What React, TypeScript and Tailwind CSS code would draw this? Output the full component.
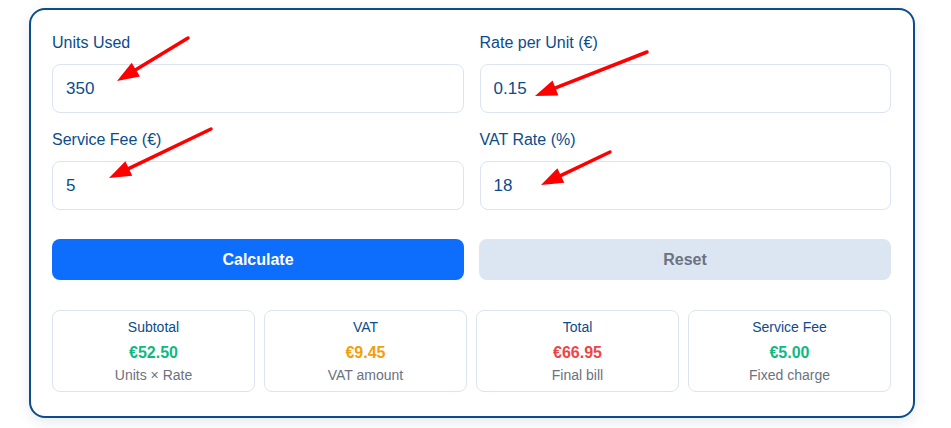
import { useState } from 'react';

const ARROWS = [
    { x1: 188, y1: 38, x2: 117, y2: 81 },
    { x1: 647, y1: 52, x2: 535, y2: 96 },
    { x1: 211, y1: 129, x2: 109, y2: 178 },
    { x1: 610, y1: 152, x2: 541, y2: 185 },
];

function Arrow({ x1, y1, x2, y2 }: { x1: number; y1: number; x2: number; y2: number }) {
    const dx = x2 - x1;
    const dy = y2 - y1;
    const len = Math.hypot(dx, dy);
    const ux = dx / len;
    const uy = dy / len;
    const head = 22;
    const half = 8;
    const bx = x2 - ux * head;
    const by = y2 - uy * head;
    const pts = `${x2},${y2} ${bx - uy * half},${by + ux * half} ${bx + uy * half},${by - ux * half}`;
    return (
        <g>
            <line x1={x1} y1={y1} x2={bx + ux * 2} y2={by + uy * 2} stroke="#ff0000" strokeWidth={3.5} strokeLinecap="round" />
            <polygon points={pts} fill="#ff0000" />
        </g>
    );
}

function Field({ label, value, onChange }: { label: string; value: string; onChange: (v: string) => void }) {
    return (
        <div className="flex flex-col">
            <label className="text-[16px] leading-6 text-[#0b4c8c] mb-[9px]">{label}</label>
            <input
                value={value}
                onChange={e => onChange(e.target.value)}
                className="h-[49px] w-full rounded-lg border border-[#dbe4f0] bg-white px-[13px] text-[17px] text-[#0b4c8c] outline-none"
            />
        </div>
    );
}

function Stat({ title, value, note, color }: { title: string; value: string; note: string; color: string }) {
    return (
        <div className="flex h-[82px] flex-col items-center justify-center rounded-lg border border-[#dbe4f0] bg-white">
            <span className="text-[14px] leading-5 text-[#0b4c8c]">{title}</span>
            <span className={`mt-[6px] text-[16px] font-bold leading-5 ${color}`}>{value}</span>
            <span className="mt-[2px] text-[14px] leading-5 text-[#6b7280]">{note}</span>
        </div>
    );
}

export default function App() {
    const [units, setUnits] = useState('350');
    const [rate, setRate] = useState('0.15');
    const [fee, setFee] = useState('5');
    const [vat, setVat] = useState('18');

    const subtotal = (parseFloat(units) || 0) * (parseFloat(rate) || 0);
    const vatAmount = subtotal * (parseFloat(vat) || 0) / 100;
    const total = subtotal + vatAmount + (parseFloat(fee) || 0);

    const reset = () => {
        setUnits('');
        setRate('');
        setFee('');
        setVat('');
    };

    return (
        <div className="relative h-[428px] w-[951px] bg-white" style={{ fontFamily: '"Liberation Sans", Arial, sans-serif' }}>
            <div className="pl-[29px] pr-[36px] pt-[8px]">
                <div className="rounded-[16px] border-2 border-[#0b4c8c] bg-white pl-[21px] pr-[22px] pt-[21px] pb-[24px] shadow-[0_4px_14px_rgba(15,40,80,0.10)]">
                    <div className="grid grid-cols-2 gap-x-[16px] gap-y-[15px]">
                        <Field label="Units Used" value={units} onChange={setUnits} />
                        <Field label="Rate per Unit (€)" value={rate} onChange={setRate} />
                        <Field label="Service Fee (€)" value={fee} onChange={setFee} />
                        <Field label="VAT Rate (%)" value={vat} onChange={setVat} />
                    </div>

                    <div className="mt-[29px] grid grid-cols-2 gap-x-[15px]">
                        <button className="h-[41px] rounded-lg bg-[#0d6efd] text-[16px] font-bold text-white">Calculate</button>
                        <button onClick={reset} className="h-[41px] rounded-lg bg-[#dce6f2] text-[16px] font-bold text-[#6b7280]">Reset</button>
                    </div>

                    <div className="mt-[30px] grid grid-cols-4 gap-x-[9px]">
                        <Stat title="Subtotal" value={`€${subtotal.toFixed(2)}`} note="Units × Rate" color="text-[#10b981]" />
                        <Stat title="VAT" value={`€${vatAmount.toFixed(2)}`} note="VAT amount" color="text-[#f59e0b]" />
                        <Stat title="Total" value={`€${total.toFixed(2)}`} note="Final bill" color="text-[#ef4444]" />
                        <Stat title="Service Fee" value={`€${(parseFloat(fee) || 0).toFixed(2)}`} note="Fixed charge" color="text-[#10b981]" />
                    </div>
                </div>
            </div>

            <svg className="pointer-events-none absolute inset-0" width={951} height={428}>
                {ARROWS.map((a, i) => <Arrow key={i} {...a} />)}
            </svg>
        </div>
    );
}
